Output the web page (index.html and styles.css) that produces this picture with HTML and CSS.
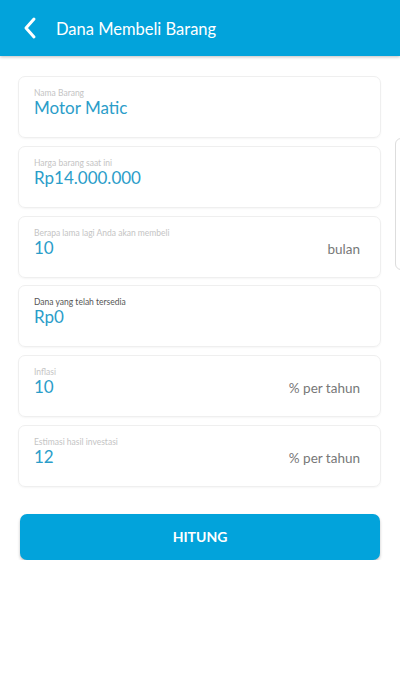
FILE: index.html
```html
<!DOCTYPE html>
<html>
<head>
    <title>Dana Membeli Barang</title>
    <link rel="stylesheet" href="styles.css">
</head>
<body>
    <div class="appbar">
        <svg class="back" width="16" height="24" viewBox="0 0 16 24">
            <path d="M12 3 L4 12 L12 21" fill="none" stroke="#fff" stroke-width="3" stroke-linecap="round" stroke-linejoin="round"/>
        </svg>
        <span class="title">Dana Membeli Barang</span>
    </div>
    <div class="form">
        <div class="field">
            <div class="label">Nama Barang</div>
            <div class="row"><span class="value">Motor Matic</span></div>
        </div>
        <div class="field">
            <div class="label">Harga barang saat ini</div>
            <div class="row"><span class="value">Rp14.000.000</span></div>
        </div>
        <div class="field">
            <div class="label">Berapa lama lagi Anda akan membeli</div>
            <div class="row"><span class="value">10</span><span class="unit">bulan</span></div>
        </div>
        <div class="field">
            <div class="label dark">Dana yang telah tersedia</div>
            <div class="row"><span class="value">Rp0</span></div>
        </div>
        <div class="field">
            <div class="label">Inflasi</div>
            <div class="row"><span class="value">10</span><span class="unit">% per tahun</span></div>
        </div>
        <div class="field">
            <div class="label">Estimasi hasil investasi</div>
            <div class="row"><span class="value">12</span><span class="unit">% per tahun</span></div>
        </div>
        <button class="hitung">HITUNG</button>
    </div>
    <div class="edge-card"></div>
</body>
</html>
```

FILE: styles.css
```css
body, html {
    margin: 0;
    padding: 0;
    background-color: #fff;
    font-family: Lato, "Open Sans", sans-serif;
}
.appbar {
    height: 56px;
    background-color: #02a3db;
    display: flex;
    align-items: center;
    padding-left: 22px;
    box-shadow: 0 1px 3px rgba(0, 0, 0, 0.25);
    position: relative;
    z-index: 1;
}
.back {
    display: block;
}
.title {
    color: #fff;
    font-size: 16.5px;
    margin-left: 18px;
    margin-top: 1px;
}
.form {
    display: flex;
    flex-direction: column;
    gap: 7.8px;
    padding: 20px 19px 0 18px;
}
.field {
    height: 62px;
    box-sizing: border-box;
    border: 1px solid #efefef;
    border-radius: 7px;
    box-shadow: 0 1px 2px rgba(0, 0, 0, 0.04);
    padding: 11px 20px 0 15px;
}
.label {
    font-size: 8.5px;
    line-height: 11px;
    color: #c4c4c4;
}
.label.dark {
    color: #555;
}
.row {
    display: flex;
    justify-content: space-between;
    align-items: baseline;
}
.value {
    font-size: 17px;
    line-height: 18px;
    color: #2b9dc9;
}
.unit {
    font-size: 13.5px;
    color: #777;
}
.hitung {
    margin: 19px 1px 0 2px;
    height: 46px;
    border: none;
    border-radius: 7px;
    background-color: #02a3db;
    color: #fff;
    font-family: Lato, sans-serif;
    font-weight: bold;
    font-size: 14px;
    box-shadow: 0 2px 3px rgba(0, 0, 0, 0.25);
}
.edge-card {
    position: absolute;
    left: 395px;
    top: 138px;
    width: 20px;
    height: 130px;
    border: 1px solid #ddd;
    border-radius: 6px;
}
```
